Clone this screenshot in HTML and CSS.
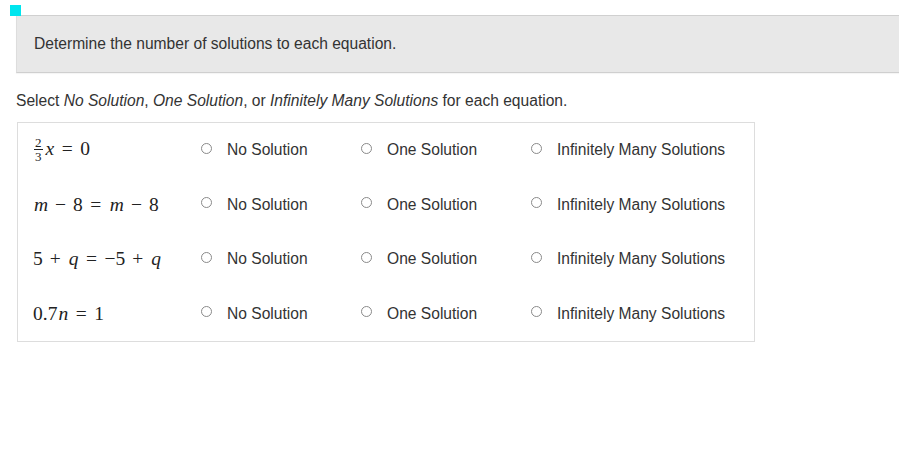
FILE: index.html
```html
<!DOCTYPE html>
<html>
<head>
<meta charset="utf-8">
<link rel="stylesheet" href="styles.css">
</head>
<body>
<div class="marker"></div>
<div class="page">
  <div class="prompt">Determine the number of solutions to each equation.</div>
  <p class="instructions">Select <em>No Solution</em>, <em>One Solution</em>, or <em>Infinitely Many Solutions</em> for each equation.</p>
  <div class="grid">
    <div class="row">
      <div class="eq"><span class="frac"><span class="num">2</span><span class="den">3</span></span><span class="v">x</span><span class="rel">=</span><span>0</span></div>
      <label class="opt"><span class="radio"></span>No Solution</label>
      <label class="opt"><span class="radio"></span>One Solution</label>
      <label class="opt"><span class="radio"></span>Infinitely Many Solutions</label>
    </div>
    <div class="row">
      <div class="eq"><span class="v">m</span><span class="bin">−</span><span>8</span><span class="rel">=</span><span class="v">m</span><span class="bin">−</span><span>8</span></div>
      <label class="opt"><span class="radio"></span>No Solution</label>
      <label class="opt"><span class="radio"></span>One Solution</label>
      <label class="opt"><span class="radio"></span>Infinitely Many Solutions</label>
    </div>
    <div class="row">
      <div class="eq"><span>5</span><span class="bin">+</span><span class="v">q</span><span class="rel">=</span><span>−5</span><span class="bin">+</span><span class="v">q</span></div>
      <label class="opt"><span class="radio"></span>No Solution</label>
      <label class="opt"><span class="radio"></span>One Solution</label>
      <label class="opt"><span class="radio"></span>Infinitely Many Solutions</label>
    </div>
    <div class="row">
      <div class="eq"><span>0.7</span><span class="v">n</span><span class="rel">=</span><span>1</span></div>
      <label class="opt"><span class="radio"></span>No Solution</label>
      <label class="opt"><span class="radio"></span>One Solution</label>
      <label class="opt"><span class="radio"></span>Infinitely Many Solutions</label>
    </div>
  </div>
</div>
</body>
</html>
```
FILE: styles.css
```css
html, body {
  margin: 0;
  padding: 0;
  background: #fff;
  overflow: hidden;
}
body {
  font-family: "Liberation Sans", Arial, sans-serif;
  font-size: 15.6px;
  color: #333;
  position: relative;
}
.marker {
  position: absolute;
  left: 10px;
  top: 5px;
  width: 11px;
  height: 11px;
  background: #00e5ee;
}
.page {
  padding: 15px 0 0 16px;
}
.prompt {
  background: #e8e8e8;
  border-top: 1px solid #d0d0d0;
  border-bottom: 1px solid #cfcfcf;
  border-left: 1px solid #ddd;
  margin-right: -20px;
  height: 58px;
  box-sizing: border-box;
  padding: 0 17px;
  display: flex;
  align-items: center;
  line-height: 20px;
  padding-bottom: 1px;
  box-shadow: 0 1px 1px rgba(0,0,0,0.04);
}
.instructions {
  margin: 18px 0 0 0;
  line-height: 20px;
  height: 20px;
}
.instructions em {
  font-style: italic;
}
.grid {
  margin-top: 11px;
  margin-left: 1px;
  width: 738px;
  box-sizing: border-box;
  border: 1px solid #ddd;
}
.row {
  display: grid;
  grid-template-columns: 168px 160px 170px auto;
  align-items: center;
  height: 54.5px;
  padding-left: 15px;
}
.eq {
  font-family: "Liberation Serif", "Times New Roman", serif;
  font-size: 19.5px;
  color: #222;
  display: flex;
  align-items: baseline;
  white-space: nowrap;
}
.eq span {
  font-family: "Liberation Serif", "Times New Roman", serif;
}
.eq .v {
  font-style: italic;
  margin-left: 1px;
}
.bin {
  margin: 0 7px;
}
.rel {
  margin: 0 7.5px;
}
.eq .frac {
  display: inline-flex;
  flex-direction: column;
  align-items: center;
  font-size: 13px;
  line-height: 11.5px;
  margin-right: 2px;
  margin-left: 1px;
  align-self: center;
  margin-top: -1px;
}
.num {
  border-bottom: 1px solid #222;
  padding: 0 1px 1px;
}
.den {
  padding-top: 1px;
}
.opt {
  display: flex;
  align-items: center;
  white-space: nowrap;
  line-height: 20px;
}
.radio {
  width: 11px;
  height: 11px;
  box-sizing: border-box;
  border: 1px solid #8a8a8a;
  border-radius: 50%;
  background: #fff;
  margin-right: 15px;
  position: relative;
  top: -2px;
  flex: none;
}
```
